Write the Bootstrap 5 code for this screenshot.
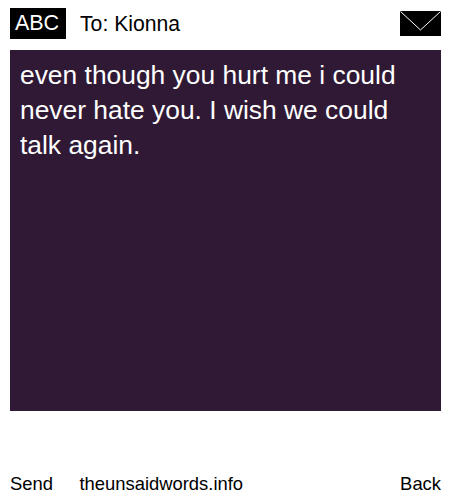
<!DOCTYPE html>
<html lang="en"><head><meta charset="utf-8"><title>Message</title>
<link href="https://cdn.jsdelivr.net/npm/bootstrap@5.3.0/dist/css/bootstrap.min.css" rel="stylesheet">
<style>
html,body{height:500px;overflow:hidden}
body{font-family:"Liberation Sans",Arial,sans-serif;color:#000;background:#fff}
.phone{width:450px;height:500px;padding:8px 9px 0 10px}
.topbar{height:31px;margin-bottom:11px}
.abc{background:#000;color:#fff;width:56px;height:31px;font-size:21.5px;line-height:30px;padding-right:2px}
.toname{font-size:21.2px;margin-left:14px;line-height:31px}
.msg{background:#301934;color:#fff;height:361px;padding:8px 10px;font-size:26.4px;line-height:35px}
.foot{font-size:18.4px;line-height:20px;margin-top:63px}
.site{margin-left:26.5px}
</style></head><body>
<div class="phone">
<div class="topbar d-flex align-items-center">
<div class="abc text-center">ABC</div>
<div class="toname flex-grow-1">To: Kionna</div>
<svg width="41" height="25" viewBox="0 0 41 25"><rect width="41" height="25" fill="#000"/><path d="M0.5 0.5 20.5 19 40.5 0.5" fill="none" stroke="#fff" stroke-width="1"/></svg>
</div>
<div class="msg">even though you hurt me i could never hate you. I wish we could talk again.</div>
<div class="foot d-flex"><span>Send</span><span class="site flex-grow-1">theunsaidwords.info</span><span>Back</span></div>
</div>
<script src="https://cdn.jsdelivr.net/npm/bootstrap@5.3.0/dist/js/bootstrap.bundle.min.js"></script>
</body></html>
